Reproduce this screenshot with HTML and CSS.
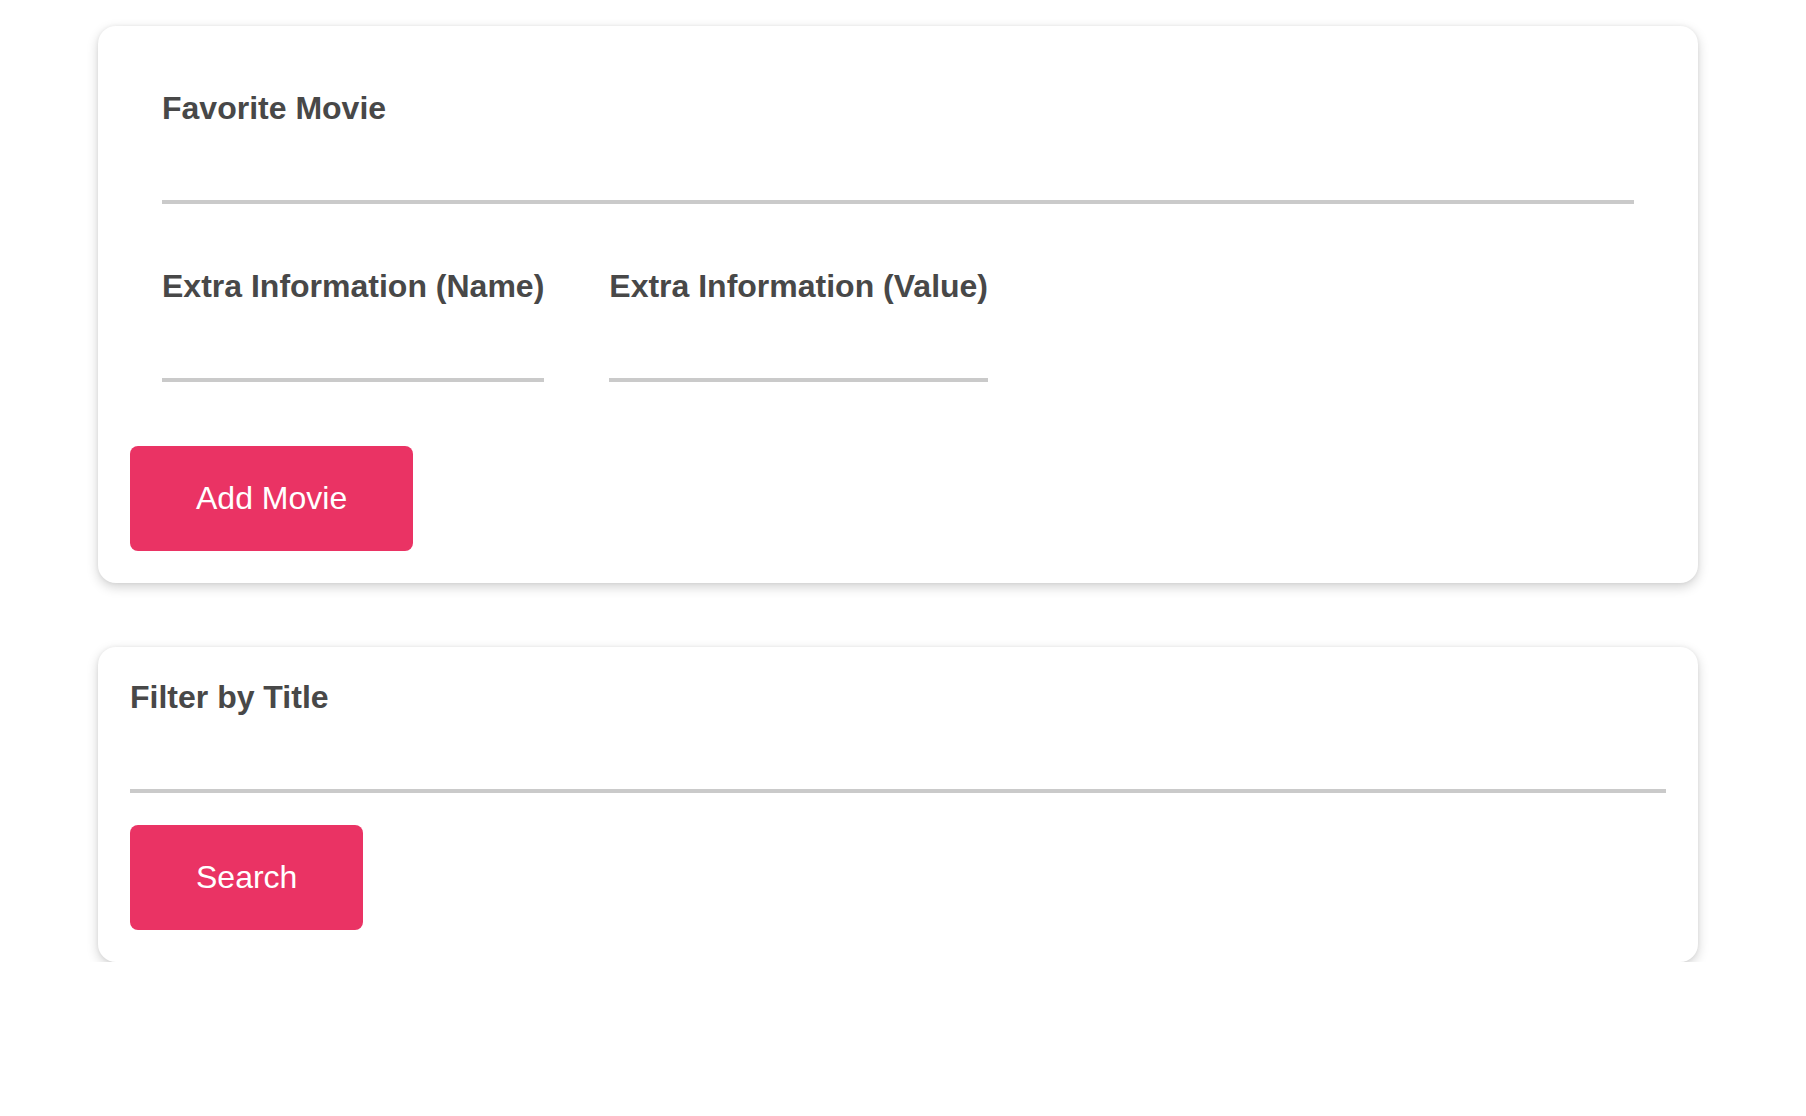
FILE: index.html
```html
<!DOCTYPE html>
<html lang="en">
<head>
<meta charset="utf-8">
<title>Movies</title>
<link rel="stylesheet" href="styles.css">
</head>
<body>
<main class="page">
  <section class="card">
    <form class="movie-form">
      <div class="fields">
        <div class="field field-full">
          <label class="label" for="movie">Favorite Movie</label>
          <input class="input" id="movie" type="text">
        </div>
        <div class="field-row">
          <div class="field">
            <label class="label" for="xname">Extra Information (Name)</label>
            <input class="input input-fit" id="xname" type="text">
          </div>
          <div class="field">
            <label class="label" for="xvalue">Extra Information (Value)</label>
            <input class="input input-fit" id="xvalue" type="text">
          </div>
        </div>
      </div>
      <button class="btn" type="button">Add Movie</button>
    </form>
  </section>
  <section class="card">
    <form class="filter-form">
      <div class="field field-full">
        <label class="label" for="filter">Filter by Title</label>
        <input class="input" id="filter" type="text">
      </div>
      <button class="btn" type="button">Search</button>
    </form>
  </section>
</main>
</body>
</html>
```
FILE: styles.css
```css
* { box-sizing: border-box; }

html, body {
  margin: 0;
  padding: 0;
  background: #ffffff;
}

body {
  font-family: "Liberation Sans", Arial, Helvetica, sans-serif;
  color: #484848;
}

.page {
  width: 1600px;
  margin: 0 0 0 98px;
  padding-top: 26px;
  display: flex;
  flex-direction: column;
  gap: 64px;
}

.card {
  background: #ffffff;
  border-radius: 18px;
  box-shadow: 0 4px 12px rgba(0, 0, 0, 0.18), 0 0 4px rgba(0, 0, 0, 0.06);
  padding: 32px;
}

.fields {
  padding: 32px 32px 0 32px;
  display: flex;
  flex-direction: column;
}

.field {
  display: flex;
  flex-direction: column;
  margin-bottom: 64px;
}

.filter-form .field {
  margin-bottom: 32px;
}

.field-row {
  display: flex;
  gap: 65px;
  align-items: flex-start;
}

.label {
  font-size: 32px;
  line-height: 37px;
  font-weight: 700;
  color: #484848;
  white-space: nowrap;
}

.input {
  display: block;
  width: 100%;
  height: 77px;
  border: none;
  border-bottom: 4px solid #cacaca;
  background: transparent;
  font-family: inherit;
  font-size: 32px;
  color: #484848;
  padding: 0;
  outline: none;
}

.input-fit {
  width: 0;
  min-width: 100%;
}

.btn {
  display: inline-flex;
  align-items: center;
  justify-content: center;
  height: 105px;
  padding: 0 66px;
  border: none;
  border-radius: 8px;
  background: #ea3364;
  color: #ffffff;
  font-family: inherit;
  font-size: 32px;
  font-weight: 400;
  cursor: pointer;
}
```
